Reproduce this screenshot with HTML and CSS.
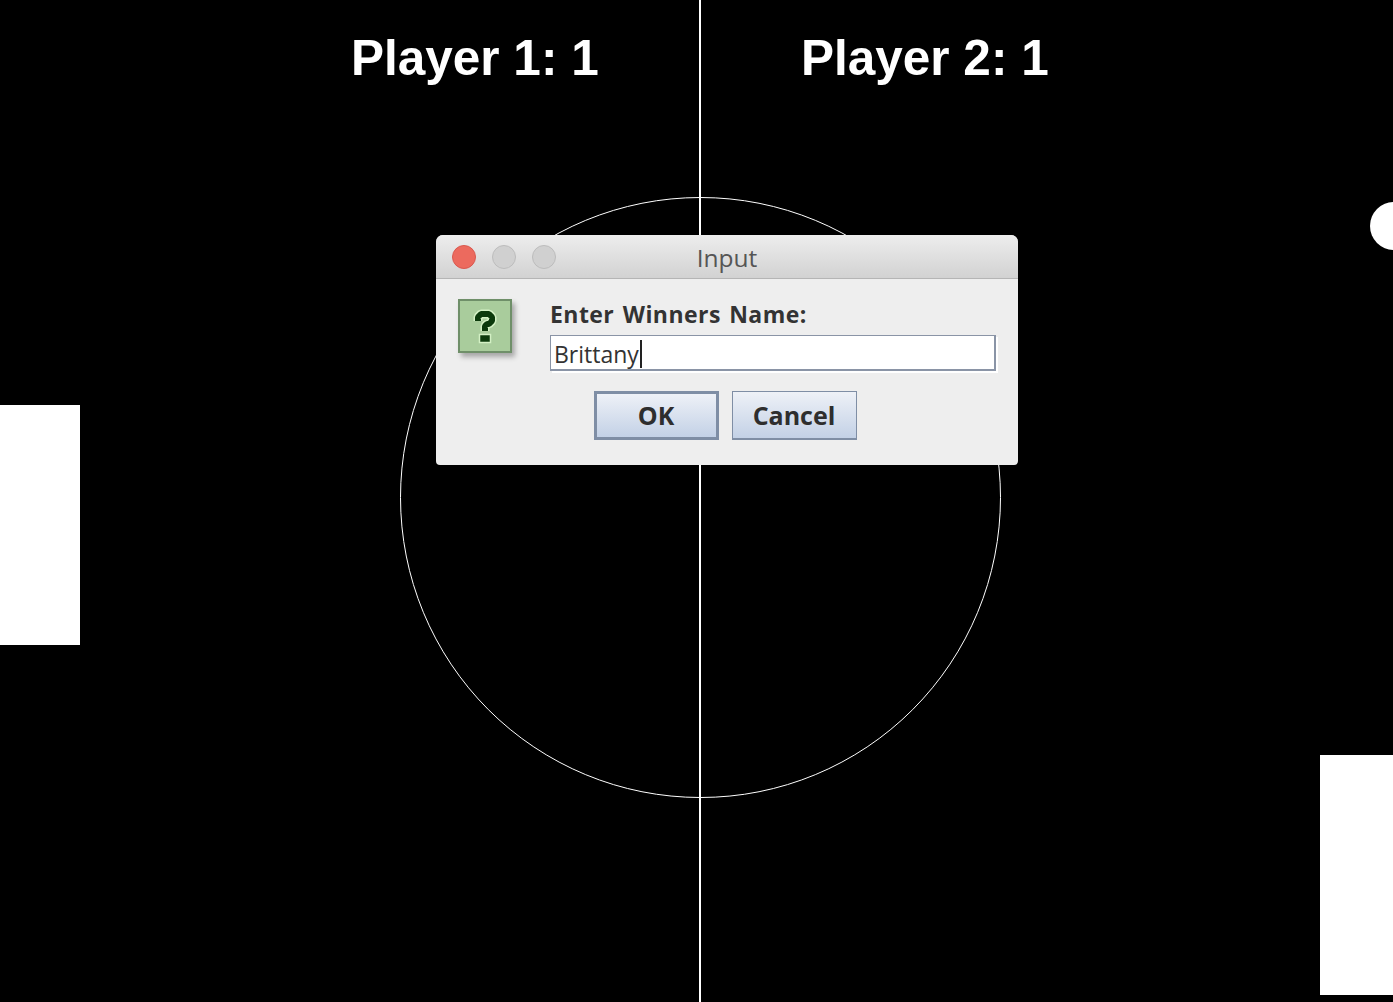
FILE: index.html
```html
<!DOCTYPE html>
<html lang="en">
<head>
<meta charset="utf-8">
<title>Pong</title>
<link rel="stylesheet" href="styles.css">
</head>
<body>
<main class="court">
  <div class="center-line"></div>
  <div class="center-circle"></div>
  <div class="paddle paddle-left"></div>
  <div class="paddle paddle-right"></div>
  <div class="ball"></div>
  <h1 class="score score-one">Player 1: 1</h1>
  <h1 class="score score-two">Player 2: 1</h1>

  <section class="dialog">
    <header class="titlebar">
      <div class="lights">
        <span class="light light-close"></span>
        <span class="light"></span>
        <span class="light"></span>
      </div>
      <div class="title">Input</div>
    </header>
    <div class="body">
      <div class="prompt">
        <div class="icon">
          <svg width="54" height="54" viewBox="0 0 54 54">
            <path d="M20 22V18L23 15H31L34 18V22L31 25H29L27 27V32" fill="none" stroke="#d3f0c4" stroke-width="9" stroke-linejoin="bevel"/>
            <path d="M20 22V18L23 15H31L34 18V22L31 25H29L27 27V32" fill="none" stroke="#0c3a0c" stroke-width="6" stroke-linejoin="bevel"/>
            <rect x="21.500" y="35.500" width="11" height="8" fill="#0c3a0c" stroke="#d3f0c4" stroke-width="1.500"/>
          </svg>
        </div>
        <div class="fields">
          <label class="label" for="winner">Enter Winners Name:</label>
          <div class="input" id="winner"><span class="value">Brittany</span><span class="caret"></span></div>
        </div>
      </div>
      <div class="actions">
        <div class="button button-default">OK</div>
        <div class="button">Cancel</div>
      </div>
    </div>
  </section>
</main>
</body>
</html>
```
FILE: styles.css
```css
* { box-sizing: border-box; }
html, body { margin: 0; padding: 0; background: #000; }
.court { position: relative; width: 1393px; height: 1002px; background: #000; overflow: hidden; }
.center-line { position: absolute; left: 699px; top: 0; width: 2px; height: 1002px; background: #fff; }
.center-circle { position: absolute; left: 400px; top: 196.500px; width: 601px; height: 601px; border: 1.500px solid #fff; border-radius: 50%; }
.paddle { position: absolute; background: #fff; }
.paddle-left { left: 0; top: 405px; width: 80px; height: 240px; }
.paddle-right { left: 1320px; top: 755px; width: 80px; height: 240px; }
.ball { position: absolute; left: 1370px; top: 202px; width: 48px; height: 48px; border-radius: 50%; background: #fff; }
.score { position: absolute; top: 29px; margin: 0; color: #fff; font: bold 49.500px/58px "Liberation Sans", Arial, sans-serif; white-space: nowrap; }
.score-one { left: 351px; }
.score-two { left: 801px; }

.dialog { position: absolute; left: 436px; top: 235px; width: 582px; height: 230px; background: #eee; border-radius: 7px 7px 4px 4px; overflow: hidden; font-family: "DejaVu Sans", sans-serif; color: #2e2e2e; }
.titlebar { position: relative; height: 44px; display: flex; align-items: center; justify-content: center; background: linear-gradient(#ededed, #d2d2d2); border-bottom: 1px solid #b5b5b5; }
.lights { position: absolute; left: 16px; top: 10px; display: flex; gap: 16px; }
.light { width: 24px; height: 24px; border-radius: 50%; background: #d0d0d0; border: 1px solid #bcbcbc; }
.light-close { background: #ec6a5e; border-color: #d9584e; }
.title { font-size: 24.500px; line-height: 44px; color: #555; padding-top: 2px; font-family: "Open Sans", sans-serif; }
.body { display: flex; flex-direction: column; padding: 20px 22px 0; }
.prompt { display: flex; gap: 38px; }
.icon { width: 54px; height: 54px; background: #a9cc9c; border: 2px solid #6f8f69; box-shadow: 3px 4px 5px rgba(0,0,0,.3); flex: none; }
.icon svg { display: block; margin: -2px; }
.fields { flex: 1; }
.label { display: block; font-size: 23px; line-height: 30px; font-weight: bold; color: #333; word-spacing: 2px; font-family: "Open Sans", sans-serif; letter-spacing: .45px; }
.input { height: 36px; margin-top: 6px; display: flex; align-items: center; padding: 2px 0 0 3px; background: #fff; border-top: 1px solid #8a94a6; border-left: 1px solid #8a94a6; border-right: 2px solid #8a94a6; border-bottom: 2px solid #8a94a6; box-shadow: 2px 2px 0 #fff; font-size: 23px; color: #333; font-family: "Open Sans", sans-serif; }
.caret { width: 2px; height: 28px; background: #222; margin-left: 1px; }
.actions { display: flex; justify-content: center; gap: 13px; margin-top: 20px; padding-right: 4px; }
.button { width: 125px; height: 49px; display: flex; align-items: center; justify-content: center; padding-bottom: 1px; background: linear-gradient(#eef1f7, #c3d1e6); border: 1px solid #7f8ea5; border-bottom-width: 2px; font: bold 25px "Open Sans", sans-serif; color: #2e2e2e; }
.button-default { border: 3px solid #7f8ea5; }
```
